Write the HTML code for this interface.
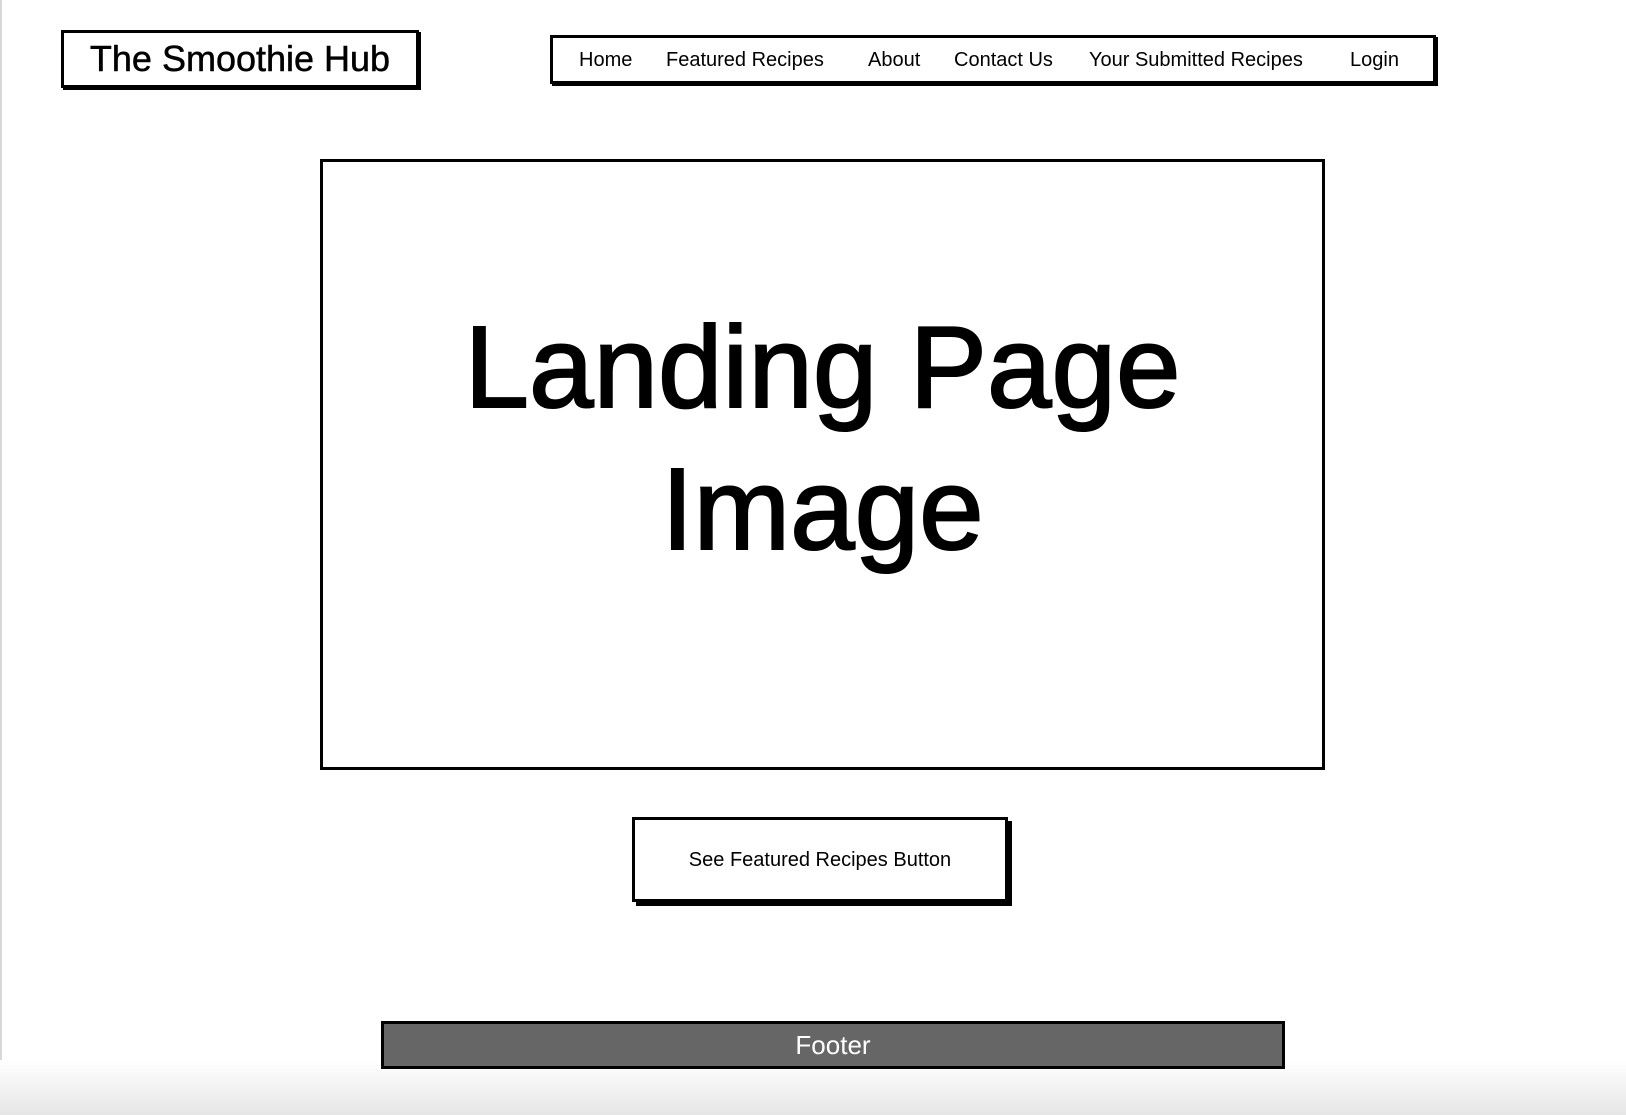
<!DOCTYPE html>
<html><head><meta charset="utf-8"><style>
html,body{margin:0;padding:0;width:1626px;height:1115px;overflow:hidden;background:#fff;font-family:"Liberation Sans",sans-serif;color:#000;position:relative}
.bl{position:absolute;left:0;top:0;width:2px;height:1115px;background:#d8d8d8}
.bot{position:absolute;left:0;top:1060px;width:1626px;height:55px;background:linear-gradient(#fff,#e6e6e6)}
.box{position:absolute;box-sizing:border-box;border:3px solid #000;background:#fff}
.logo{left:61px;top:30px;width:358px;height:58px;font-size:36px;line-height:52px;text-align:center;box-shadow:2px 2px 0 #000;-webkit-text-stroke:0.5px #000}
.nav{left:550px;top:35px;width:886px;height:49px;font-size:20px;line-height:45px;box-shadow:2px 2px 0 #000}
.nav span{position:absolute;top:0}
.img{left:320px;top:159px;width:1005px;height:611px;border-width:3px}
.big{position:absolute;left:320px;width:1005px;text-align:center;font-size:116px;line-height:140px;-webkit-text-stroke:2px #000}
.btn{left:632px;top:817px;width:376px;height:85px;font-size:20px;line-height:80px;text-align:center;box-shadow:4px 4px 0 #000}
.foot{left:381px;top:1021px;width:904px;height:48px;background:#666;color:#fff;font-size:26px;line-height:42px;text-align:center}
</style></head><body>
<div class="bl"></div><div class="bot"></div>
<div class="box logo">The Smoothie Hub</div>
<div class="box nav">
<span style="left:26px">Home</span>
<span style="left:113px">Featured Recipes</span>
<span style="left:315px">About</span>
<span style="left:401px">Contact Us</span>
<span style="left:536px">Your Submitted Recipes</span>
<span style="left:797px">Login</span>
</div>
<div class="box img"></div>
<div class="big" style="top:297px">Landing Page</div>
<div class="big" style="top:439px">Image</div>
<div class="box btn">See Featured Recipes Button</div>
<div class="box foot">Footer</div>
</body></html>
